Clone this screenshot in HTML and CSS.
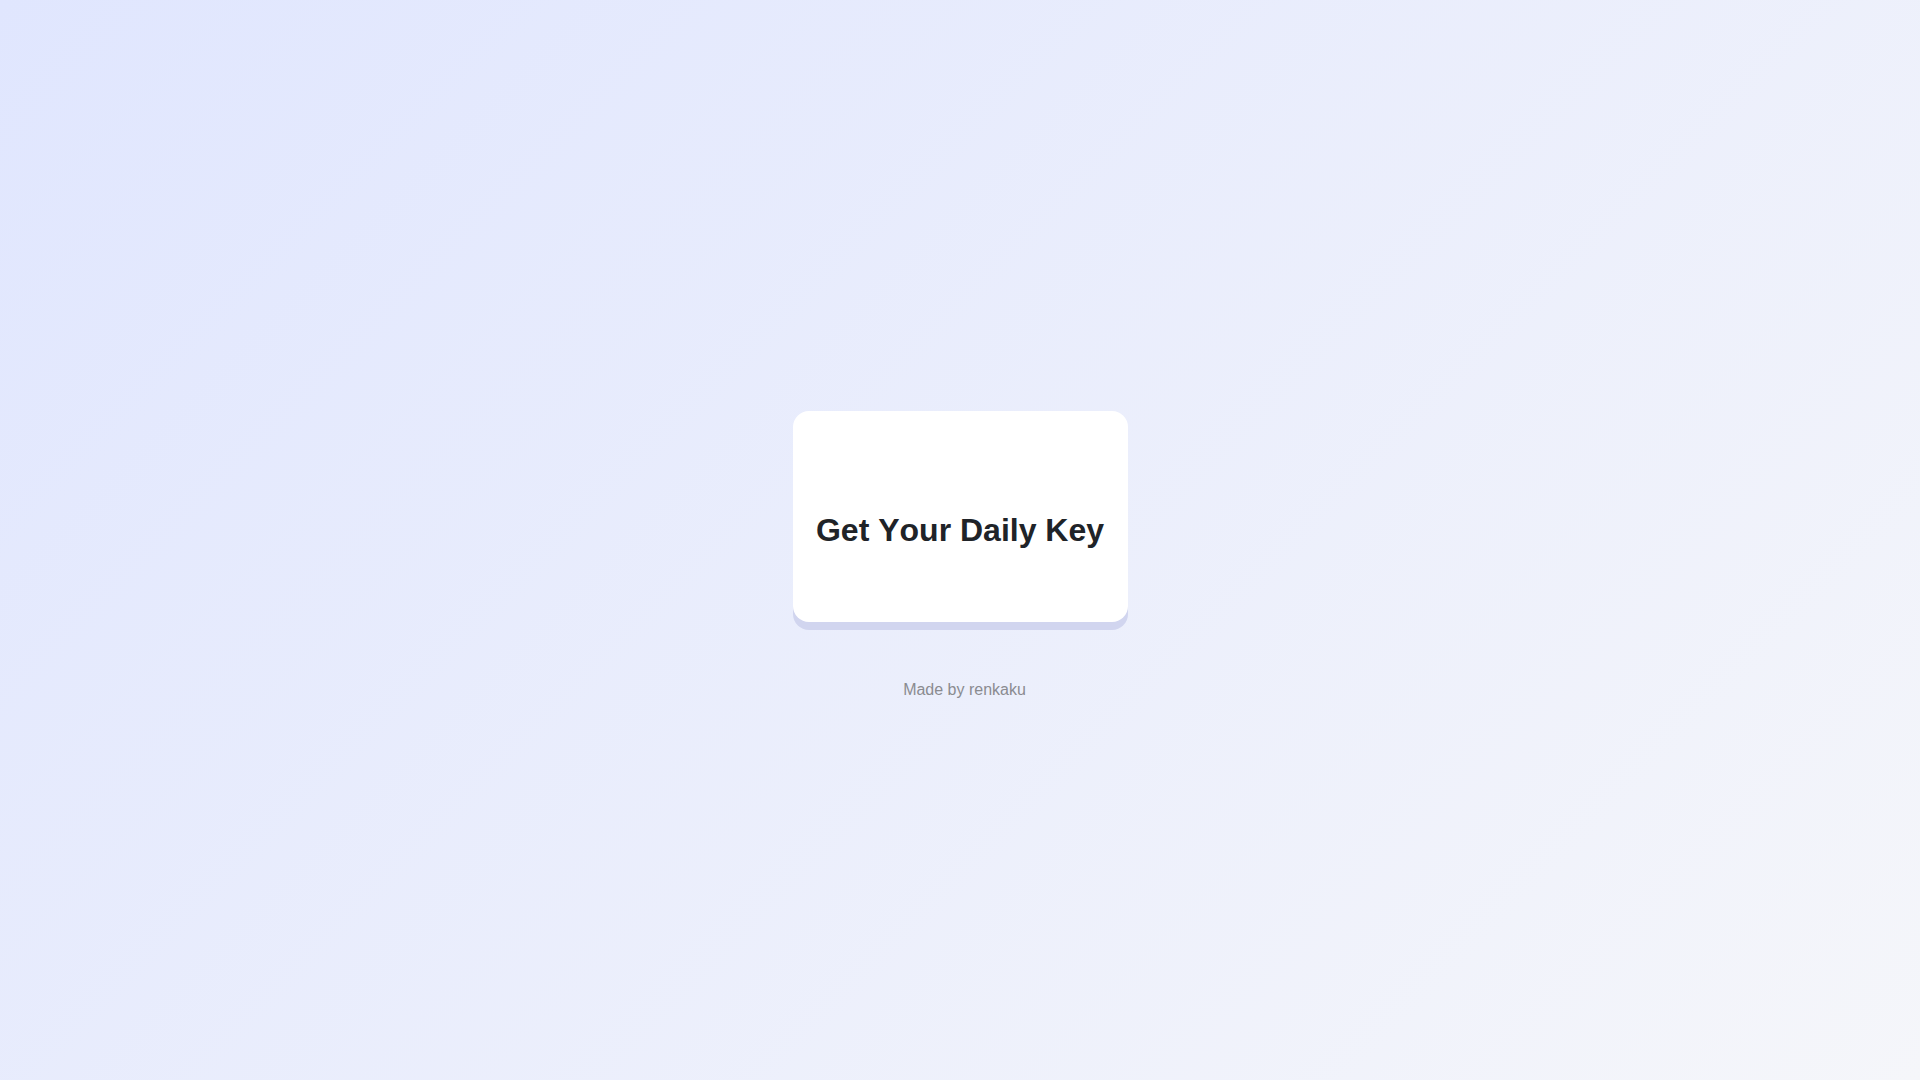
FILE: index.html
```html
<!DOCTYPE html>
<html lang="en">
<head>
<meta charset="utf-8">
<title>Get Your Daily Key</title>
<link rel="stylesheet" href="styles.css">
</head>
<body>
<main class="page">
  <section class="card">
    <h1 class="card-title">Get Your Daily Key</h1>
  </section>
  <footer class="credit">Made by renkaku</footer>
</main>
</body>
</html>
```

FILE: styles.css
```css
* { box-sizing: border-box; }
html, body { margin: 0; padding: 0; }
body {
  font-family: "Liberation Sans", Arial, sans-serif;
  background: linear-gradient(135deg, #e0e6fe 0%, #f5f6fa 100%);
  min-height: 100vh;
  color: #202328;
}
.page {
  min-height: 100vh;
  display: flex;
  flex-direction: column;
  align-items: center;
  justify-content: center;
  padding-top: 30px;
}
.card {
  width: 335px;
  background: #ffffff;
  border-radius: 16px;
  padding: 101px 20px 73px;
  box-shadow: 0 8px 0 #d1d5ef;
  text-align: center;
}
.card-title {
  margin: 0;
  font-size: 32px;
  font-weight: 700;
  color: #202328;
  white-space: nowrap;
  font-kerning: none;
}
.credit {
  margin-top: 59px;
  font-size: 16px;
  color: #8a8b90;
  padding-left: 9px;
}
```
